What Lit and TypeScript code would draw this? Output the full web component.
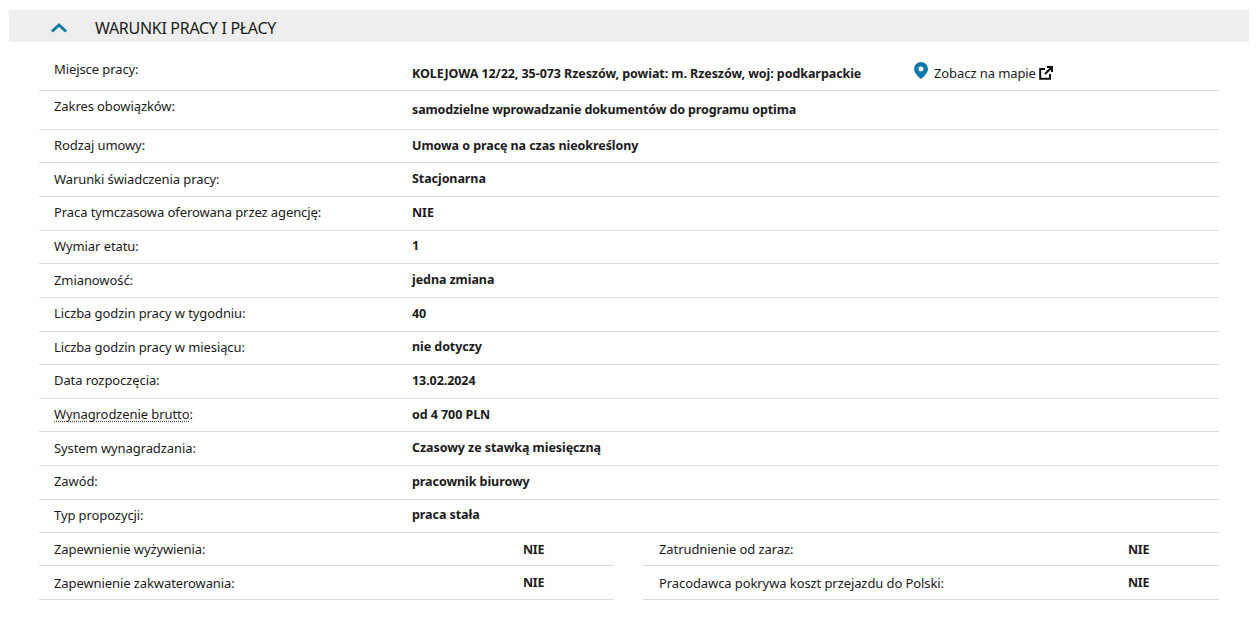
import { LitElement, html, css } from "lit";
import { customElement } from "lit/decorators.js";

const rows: [string, string][] = [
  ["Rodzaj umowy:", "Umowa o pracę na czas nieokreślony"],
  ["Warunki świadczenia pracy:", "Stacjonarna"],
  ["Praca tymczasowa oferowana przez agencję:", "NIE"],
  ["Wymiar etatu:", "1"],
  ["Zmianowość:", "jedna zmiana"],
  ["Liczba godzin pracy w tygodniu:", "40"],
  ["Liczba godzin pracy w miesiącu:", "nie dotyczy"],
  ["Data rozpoczęcia:", "13.02.2024"],
  ["Wynagrodzenie brutto:", "od 4 700 PLN"],
  ["System wynagradzania:", "Czasowy ze stawką miesięczną"],
  ["Zawód:", "pracownik biurowy"],
  ["Typ propozycji:", "praca stała"],
];

@customElement("app-root")
export class AppRoot extends LitElement {
  static styles = css`
    :host { display: block; width: 1260px; height: 630px; background: #fff; font-family: "Noto Sans", sans-serif; font-size: 13px; letter-spacing: -0.09px; color: #1b1b1b; overflow: hidden; }
    .wrap { padding: 10px 11px 0 9px; }
    .head { height: 32px; background: #eeeeee; display: flex; align-items: center; padding-left: 41px; gap: 27px; font-size: 16px; letter-spacing: -0.3px; color: #1b1b1b; }
    .head span { padding-top: 3px; }
    .head svg { width: 18px; height: 11px; display: block; margin-top: 2px; }
    .table { margin: 0 30px; }
    .row { display: flex; height: 33.62px; align-items: center; border-bottom: 1px solid #dcdcdc; box-sizing: border-box; padding-bottom: 2px; }
    .row.first { height: 49px; align-items: flex-start; padding-top: 18px; padding-bottom: 0; }
    .row.second { height: 38.85px; align-items: flex-start; padding-top: 6px; padding-bottom: 0; }
    .label { width: 373px; padding-left: 15px; box-sizing: border-box; flex: none; }
    .value { font-weight: 700; font-size: 12.5px; letter-spacing: -0.07px; }
    .first .value { margin-top: 5px; width: 502px; flex: none; }
    .second .value { margin-top: 4px; letter-spacing: -0.12px; }
    .map { display: flex; align-items: center; gap: 6px; margin-top: 4px; }
    .map .pin { width: 14px; height: 17px; margin-top: -6px; }
    .map .ext { width: 14px; height: 14px; margin-left: -3px; margin-top: -1px; }
    .hint { text-decoration: underline dotted #555; text-underline-offset: 2px; }
    .pair { display: grid; grid-template-columns: 575px 576px; column-gap: 29px; }
    .pair .row { padding-left: 15px; height: 33.2px; padding-bottom: 0; }
    .pair .row:nth-child(even) { padding-left: 16px; }
    .pair .row:nth-child(n+3) { padding-top: 1px; }
    .pair .name { width: 469px; flex: none; }
    .pair .value { letter-spacing: -0.3px; }
  `;

  render() {
    return html`<div class="wrap">
      <div class="head">
        <svg viewBox="0 0 18 11"><path d="M2 9.500 9 3l7 6.500" fill="none" stroke="#0e7aa8" stroke-width="3"/></svg>
        <span>WARUNKI PRACY I PŁACY</span>
      </div>
      <div class="table">
        <div class="row first">
          <div class="label">Miejsce pracy:</div>
          <div class="value">KOLEJOWA 12/22, 35-073 Rzeszów, powiat: m. Rzeszów, woj: podkarpackie</div>
          <div class="map">
            <svg class="pin" viewBox="0 0 14 17"><path fill-rule="evenodd" d="M7 0a7 7 0 0 1 7 7c0 3.600-4 7.600-7 10C4 14.600 0 10.600 0 7a7 7 0 0 1 7-7Zm0 4.500a2.500 2.500 0 1 0 0 5 2.500 2.500 0 0 0 0-5Z" fill="#0e7aa8"/></svg>
            <span>Zobacz na mapie</span>
            <svg class="ext" viewBox="0 0 14 14"><path d="M11 8v4.800H1.200V3H6M8 1h5v5M13 1 6 8" fill="none" stroke="#111" stroke-width="2"/></svg>
          </div>
        </div>
        <div class="row second">
          <div class="label">Zakres obowiązków:</div>
          <div class="value">samodzielne wprowadzanie dokumentów do programu optima</div>
        </div>
        ${rows.map(([l, v]) => {
          const hint = l.startsWith("Wynagrodzenie");
          return html`<div class="row">
            <div class="label">${hint ? html`<span class="hint">${l.slice(0, -1)}</span>:` : l}</div>
            <div class="value">${v}</div>
          </div>`;
        })}
        <div class="pair">
          <div class="row"><div class="name">Zapewnienie wyżywienia:</div><div class="value">NIE</div></div>
          <div class="row"><div class="name">Zatrudnienie od zaraz:</div><div class="value">NIE</div></div>
          <div class="row"><div class="name">Zapewnienie zakwaterowania:</div><div class="value">NIE</div></div>
          <div class="row"><div class="name">Pracodawca pokrywa koszt przejazdu do Polski:</div><div class="value">NIE</div></div>
        </div>
      </div>
    </div>`;
  }
}
